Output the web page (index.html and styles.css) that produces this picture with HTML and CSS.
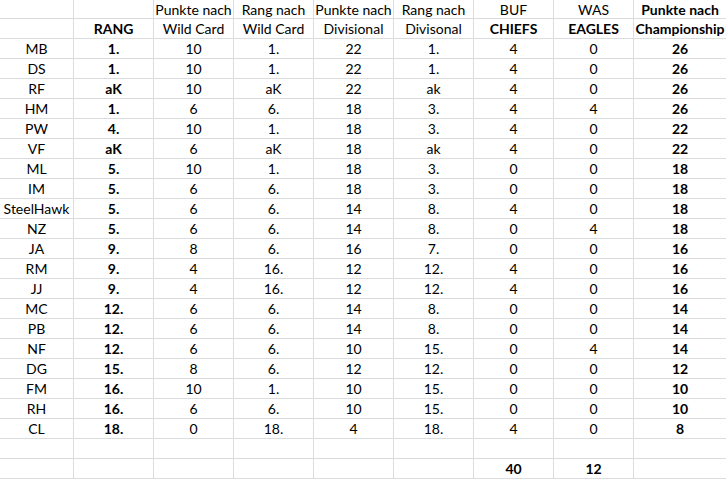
FILE: index.html
```html
<!DOCTYPE html>
<html>
<head>
<meta charset="utf-8">
<link rel="stylesheet" href="styles.css">
</head>
<body>
<div class="sheet">
  <div class="c"></div><div class="c"></div><div class="c">Punkte nach</div><div class="c">Rang nach</div><div class="c">Punkte nach</div><div class="c">Rang nach</div><div class="c">BUF</div><div class="c">WAS</div><div class="c b last">Punkte nach</div>
  <div class="c"></div><div class="c b">RANG</div><div class="c">Wild Card</div><div class="c">Wild Card</div><div class="c">Divisional</div><div class="c">Divisonal</div><div class="c b">CHIEFS</div><div class="c b">EAGLES</div><div class="c b last">Championship</div>

  <div class="c">MB</div><div class="c b">1.</div><div class="c">10</div><div class="c">1.</div><div class="c">22</div><div class="c">1.</div><div class="c">4</div><div class="c">0</div><div class="c b last">26</div>
  <div class="c">DS</div><div class="c b">1.</div><div class="c">10</div><div class="c">1.</div><div class="c">22</div><div class="c">1.</div><div class="c">4</div><div class="c">0</div><div class="c b last">26</div>
  <div class="c">RF</div><div class="c b">aK</div><div class="c">10</div><div class="c">aK</div><div class="c">22</div><div class="c">ak</div><div class="c">4</div><div class="c">0</div><div class="c b last">26</div>
  <div class="c">HM</div><div class="c b">1.</div><div class="c">6</div><div class="c">6.</div><div class="c">18</div><div class="c">3.</div><div class="c">4</div><div class="c">4</div><div class="c b last">26</div>
  <div class="c">PW</div><div class="c b">4.</div><div class="c">10</div><div class="c">1.</div><div class="c">18</div><div class="c">3.</div><div class="c">4</div><div class="c">0</div><div class="c b last">22</div>
  <div class="c">VF</div><div class="c b">aK</div><div class="c">6</div><div class="c">aK</div><div class="c">18</div><div class="c">ak</div><div class="c">4</div><div class="c">0</div><div class="c b last">22</div>
  <div class="c">ML</div><div class="c b">5.</div><div class="c">10</div><div class="c">1.</div><div class="c">18</div><div class="c">3.</div><div class="c">0</div><div class="c">0</div><div class="c b last">18</div>
  <div class="c">IM</div><div class="c b">5.</div><div class="c">6</div><div class="c">6.</div><div class="c">18</div><div class="c">3.</div><div class="c">0</div><div class="c">0</div><div class="c b last">18</div>
  <div class="c">SteelHawk</div><div class="c b">5.</div><div class="c">6</div><div class="c">6.</div><div class="c">14</div><div class="c">8.</div><div class="c">4</div><div class="c">0</div><div class="c b last">18</div>
  <div class="c">NZ</div><div class="c b">5.</div><div class="c">6</div><div class="c">6.</div><div class="c">14</div><div class="c">8.</div><div class="c">0</div><div class="c">4</div><div class="c b last">18</div>
  <div class="c">JA</div><div class="c b">9.</div><div class="c">8</div><div class="c">6.</div><div class="c">16</div><div class="c">7.</div><div class="c">0</div><div class="c">0</div><div class="c b last">16</div>
  <div class="c">RM</div><div class="c b">9.</div><div class="c">4</div><div class="c">16.</div><div class="c">12</div><div class="c">12.</div><div class="c">4</div><div class="c">0</div><div class="c b last">16</div>
  <div class="c">JJ</div><div class="c b">9.</div><div class="c">4</div><div class="c">16.</div><div class="c">12</div><div class="c">12.</div><div class="c">4</div><div class="c">0</div><div class="c b last">16</div>
  <div class="c">MC</div><div class="c b">12.</div><div class="c">6</div><div class="c">6.</div><div class="c">14</div><div class="c">8.</div><div class="c">0</div><div class="c">0</div><div class="c b last">14</div>
  <div class="c">PB</div><div class="c b">12.</div><div class="c">6</div><div class="c">6.</div><div class="c">14</div><div class="c">8.</div><div class="c">0</div><div class="c">0</div><div class="c b last">14</div>
  <div class="c">NF</div><div class="c b">12.</div><div class="c">6</div><div class="c">6.</div><div class="c">10</div><div class="c">15.</div><div class="c">0</div><div class="c">4</div><div class="c b last">14</div>
  <div class="c">DG</div><div class="c b">15.</div><div class="c">8</div><div class="c">6.</div><div class="c">12</div><div class="c">12.</div><div class="c">0</div><div class="c">0</div><div class="c b last">12</div>
  <div class="c">FM</div><div class="c b">16.</div><div class="c">10</div><div class="c">1.</div><div class="c">10</div><div class="c">15.</div><div class="c">0</div><div class="c">0</div><div class="c b last">10</div>
  <div class="c">RH</div><div class="c b">16.</div><div class="c">6</div><div class="c">6.</div><div class="c">10</div><div class="c">15.</div><div class="c">0</div><div class="c">0</div><div class="c b last">10</div>
  <div class="c">CL</div><div class="c b">18.</div><div class="c">0</div><div class="c">18.</div><div class="c">4</div><div class="c">18.</div><div class="c">4</div><div class="c">0</div><div class="c b last">8</div>

  <div class="c"></div><div class="c"></div><div class="c"></div><div class="c"></div><div class="c"></div><div class="c"></div><div class="c"></div><div class="c"></div><div class="c last"></div>
  <div class="c"></div><div class="c"></div><div class="c"></div><div class="c"></div><div class="c"></div><div class="c"></div><div class="c b">40</div><div class="c b">12</div><div class="c last"></div>
</div>
</body>
</html>
```
FILE: styles.css
```css
html, body { margin: 0; padding: 0; background: #fff; }
body { font-family: "Lato", "Open Sans", sans-serif; font-size: 14px; color: #000; overflow: hidden; }
.sheet {
  display: grid;
  grid-template-columns: 74px repeat(7, 80px) 92px;
  grid-template-rows: 19px;
  grid-auto-rows: 20px;
  width: 726px;
}
.c {
  box-sizing: border-box;
  border-right: 1px solid #dadcdd;
  border-bottom: 1px solid #dadcdd;
  text-align: center;
  line-height: 20px;
  white-space: nowrap;
  overflow: visible;
}
.b { font-weight: bold; }
.last { border-right: none; }
```
